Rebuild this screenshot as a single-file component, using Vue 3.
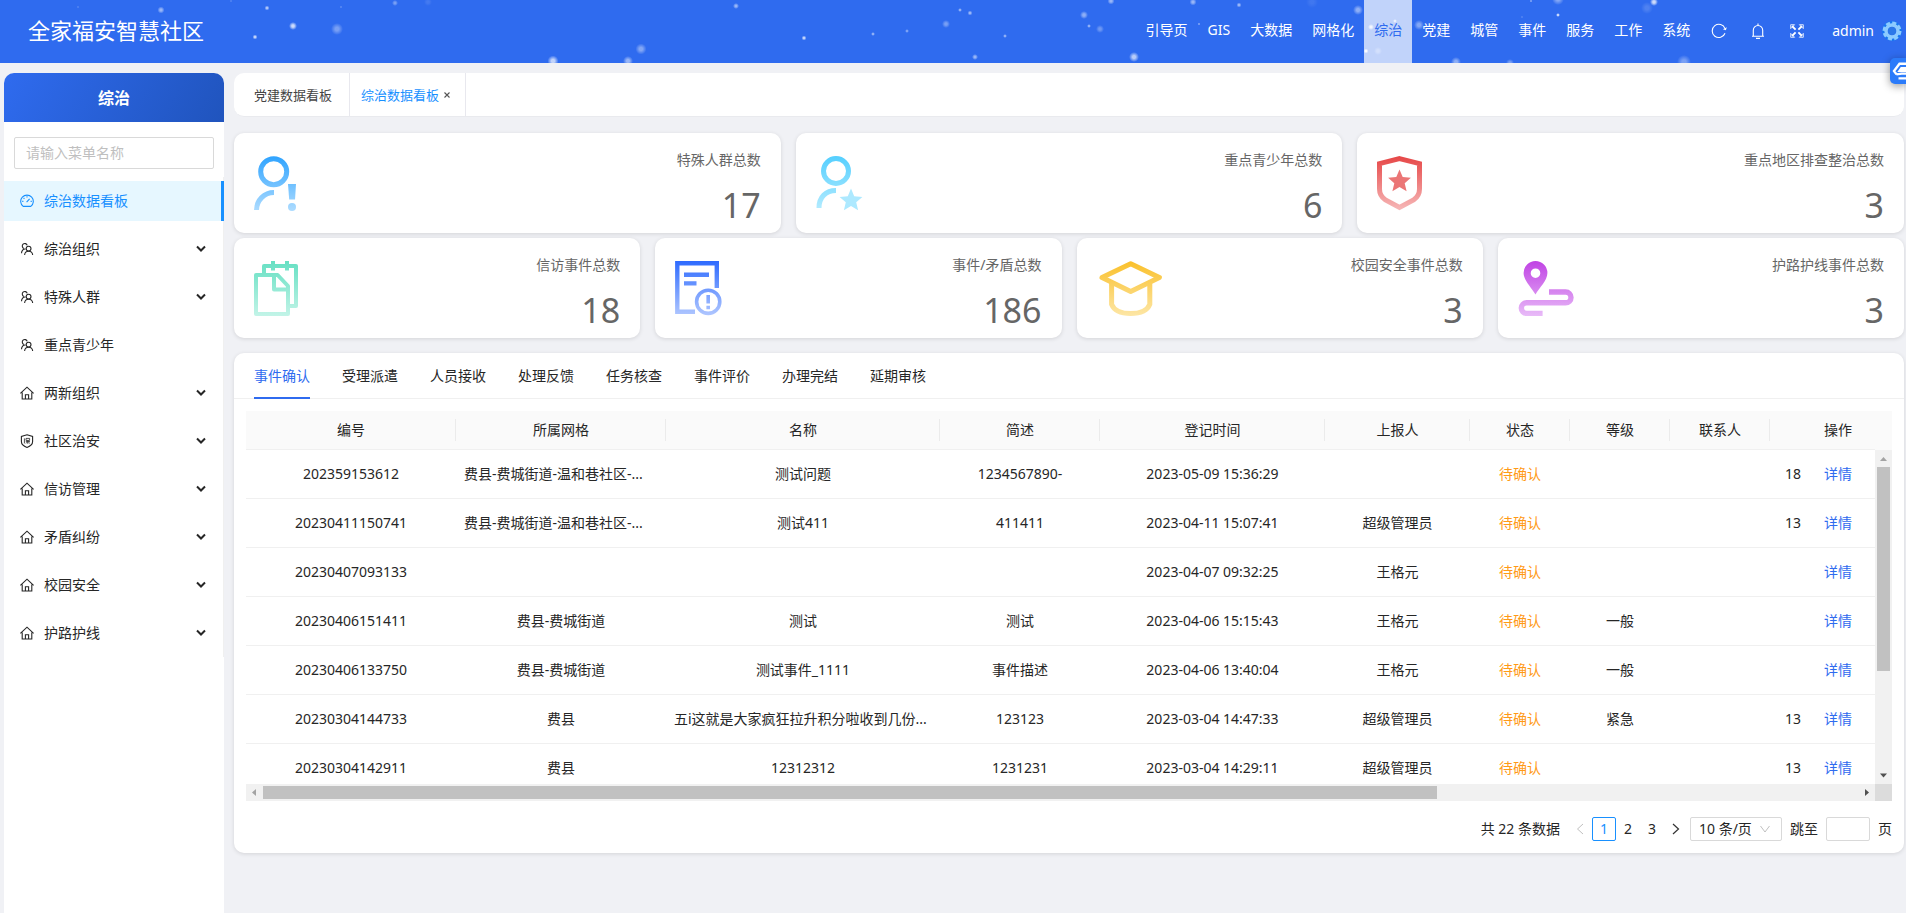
<script setup>
import { ref } from 'vue'

const navItems = ['引导页', 'GIS', '大数据', '网格化', '综治', '党建', '城管', '事件', '服务', '工作', '系统']
const activeNav = ref('综治')

const dots = [
  [78, 7, 1, 0.4], [161, 10, 3.5, 0.5], [231, 1, 1, 0.4], [267, 8, 2.5, 0.6], [293, 26, 4, 0.75],
  [255, 37, 2.5, 0.7], [337, 29, 6, 0.35], [341, 7, 1, 0.5], [395, 3, 3, 0.35], [428, 2, 4, 0.1],
  [553, 61, 5.5, 0.7], [628, 61, 5, 0.5], [641, 49, 5.5, 0.4], [736, 6, 3, 0.5], [804, 38, 2.5, 0.7],
  [873, 34, 2, 0.5], [907, 31, 2, 0.4], [946, 24, 4, 0.35], [960, 10, 2, 0.5], [970, 13, 2.5, 0.5],
  [975, 57, 3, 0.5], [1005, 36, 2, 0.5], [1084, 15, 4, 0.45], [1089, 26, 2, 0.5], [1100, 29, 4, 0.3],
  [1111, 1, 3.5, 0.5], [1134, 57, 5, 0.65], [1193, 2, 3.5, 0.5], [1199, 24, 1.5, 0.4], [1239, 5, 2.5, 0.5],
  [1312, 2, 6, 0.08], [1358, 10, 5, 0.45], [1371, 27, 3, 0.8], [1366, 51, 2.5, 0.9], [1395, 21, 2, 0.7],
  [1378, 51, 4, 0.3], [1419, 25, 5, 0.4], [1456, 62, 5, 0.45], [1510, 63, 4, 0.35], [1522, 17, 1, 0.4],
  [1531, 1, 1.5, 0.4], [1558, 15, 2, 0.8], [1558, -1, 6, 0.4], [1647, 8, 6, 0.15], [1654, 2, 4, 0.75],
  [1638, 26, 3, 0.3], [1684, 62, 7, 0.35],
]

const menu = [
  { text: '综治数据看板', icon: 'dashboard', sub: false },
  { text: '综治组织', icon: 'team', sub: true },
  { text: '特殊人群', icon: 'team', sub: true },
  { text: '重点青少年', icon: 'team', sub: false },
  { text: '两新组织', icon: 'home', sub: true },
  { text: '社区治安', icon: 'shield', sub: true },
  { text: '信访管理', icon: 'home', sub: true },
  { text: '矛盾纠纷', icon: 'home', sub: true },
  { text: '校园安全', icon: 'home', sub: true },
  { text: '护路护线', icon: 'home', sub: true },
]
const activeMenu = ref('综治数据看板')

const statsTop = [
  { label: '特殊人群总数', value: 17, icon: 'alert', from: '#2ea3ff', to: '#b0ddff' },
  { label: '重点青少年总数', value: 6, icon: 'youth', from: '#54cfff', to: '#b8edff' },
  { label: '重点地区排查整治总数', value: 3, icon: 'badge', from: '#e64646', to: '#f7bcbc' },
]
const statsBottom = [
  { label: '信访事件总数', value: 18, icon: 'files', from: '#66e0c3', to: '#c4f4e8' },
  { label: '事件/矛盾总数', value: 186, icon: 'report', from: '#2e6bff', to: '#b3c9ff' },
  { label: '校园安全事件总数', value: 3, icon: 'school', from: '#fac02a', to: '#fde7a8' },
  { label: '护路护线事件总数', value: 3, icon: 'route', from: '#c043e4', to: '#e9bdf8' },
]
const statRows = [statsTop, statsBottom]

const tabs = ['事件确认', '受理派遣', '人员接收', '处理反馈', '任务核查', '事件评价', '办理完结', '延期审核']
const activeTab = ref('事件确认')

const headers = ['编号', '所属网格', '名称', '简述', '登记时间', '上报人', '状态', '等级', '联系人']
const rows = [
  ['202359153612', '费县-费城街道-温和巷社区-...', '测试问题', '1234567890-', '2023-05-09 15:36:29', '', '待确认', '', '', '18'],
  ['20230411150741', '费县-费城街道-温和巷社区-...', '测试411', '411411', '2023-04-11 15:07:41', '超级管理员', '待确认', '', '', '13'],
  ['20230407093133', '', '', '', '2023-04-07 09:32:25', '王格元', '待确认', '', '', ''],
  ['20230406151411', '费县-费城街道', '测试', '测试', '2023-04-06 15:15:43', '王格元', '待确认', '一般', '', ''],
  ['20230406133750', '费县-费城街道', '测试事件_1111', '事件描述', '2023-04-06 13:40:04', '王格元', '待确认', '一般', '', ''],
  ['20230304144733', '费县', '五i这就是大家疯狂拉升积分啦收到几份...', '123123', '2023-03-04 14:47:33', '超级管理员', '待确认', '紧急', '', '13'],
  ['20230304142911', '费县', '12312312', '1231231', '2023-03-04 14:29:11', '超级管理员', '待确认', '', '', '13'],
]
const pages = [1, 2, 3]
const page = ref(1)
const star = '0,-12 3.2,-4.4 11.4,-3.7 5.2,1.7 7.1,9.7 0,5.5 -7.1,9.7 -5.2,1.7 -11.4,-3.7 -3.2,-4.4'
</script>

<template>
  <div class="app">
    <header class="topbar">
      <svg class="dots" aria-hidden="true">
        <defs>
          <radialGradient id="glow">
            <stop offset="0.3" stop-color="#fff" />
            <stop offset="1" stop-color="#fff" stop-opacity="0" />
          </radialGradient>
        </defs>
        <circle v-for="(d, i) in dots" :key="i" :cx="d[0]" :cy="d[1]" :r="d[2]" :opacity="d[3]" fill="url(#glow)" />
      </svg>
      <h1 class="brand">全家福安智慧社区</h1>
      <nav class="nav">
        <a v-for="n in navItems" :key="n" href="#" :class="{ active: n === activeNav }" @click.prevent="activeNav = n">{{ n }}</a>
      </nav>
      <div class="tools">
        <button type="button" aria-label="刷新">
          <svg width="16" height="16" viewBox="0 0 16 16" fill="none" stroke="#fff" stroke-width="1.1">
            <path d="M14 10.2A6.6 6.6 0 1 1 14 5.6" />
            <path d="M15.8 4.2 14.9 7.2 11.9 6.2Z" fill="#fff" stroke="none" />
          </svg>
        </button>
        <button type="button" aria-label="通知">
          <svg width="16" height="16" viewBox="0 0 16 16" fill="none" stroke="#fff" stroke-width="1.1">
            <path d="M2 13.2H14M3.3 13V7.2a4.7 4.7 0 0 1 9.4 0V13M8 2.4V.4M6 15.4H10" />
          </svg>
        </button>
        <button type="button" aria-label="全屏">
          <svg width="14" height="14" viewBox="0 0 14 14" fill="#fff" stroke="#fff">
            <path d="M.7.7H4.6L.7 4.6ZM13.3.7V4.6L9.4.7ZM.7 13.3V9.4L4.6 13.3ZM13.3 13.3H9.4L13.3 9.4Z" stroke-width=".8" />
            <path d="M2 2 5.6 5.6M12 2 8.4 5.6M2 12 5.6 8.4M12 12 8.4 8.4" stroke-width="1.8" />
          </svg>
        </button>
      </div>
      <a class="user" href="#">
        <span>admin</span>
        <svg width="20" height="20" viewBox="0 0 20 20" fill="none">
          <circle cx="10" cy="10" r="8.6" stroke="#1677f0" stroke-width="2.6" />
          <circle cx="10" cy="10" r="8" stroke="#8ccbff" stroke-width="3" stroke-dasharray="4 2.28" />
          <circle cx="10" cy="10" r="6" stroke="#8ccbff" stroke-width="3.4" />
          <circle cx="10" cy="10" r="4" fill="#2b78e8" />
        </svg>
      </a>
      <button class="float" type="button" aria-label="助手">
        <svg width="16" height="18" viewBox="0 0 16 18" fill="none" stroke="#fff" stroke-width="2.4">
          <path d="M17 1.8H7.5L2 9l2.5 3.4M17 11.6H9.6L4.4 12.4M17 6.2H9.4L7.6 8.8H17M6.5 16.4H17" />
        </svg>
      </button>
    </header>

    <div class="layout">
      <aside class="side">
        <h2 class="side-title">综治</h2>
        <div class="search">
          <input type="text" placeholder="请输入菜单名称" aria-label="请输入菜单名称" />
        </div>
        <ul class="menu">
          <li v-for="m in menu" :key="m.text">
            <a href="#" :class="{ active: m.text === activeMenu }" @click.prevent="activeMenu = m.text">
              <svg v-if="m.icon === 'dashboard'" class="mi" viewBox="0 0 14 14">
                <path d="M3.2 12.4A6.3 6.3 0 1 1 10.8 12.4Z M6.6 8.2 9.6 4.8M7 2.2V3.4M2.2 7.4H3.4M10.6 7.4H11.8M3.6 4 4.4 4.8" />
              </svg>
              <svg v-else-if="m.icon === 'team'" class="mi" viewBox="0 0 14 14">
                <circle cx="8.6" cy="6.6" r="2.4" />
                <path d="M4.6 13C4.8 10.4 6.4 9.2 8.6 9.2S12.4 10.4 12.7 13M7.2 3.4A2.5 2.5 0 1 0 4 6.4M5.6 7C3 6.8 1.6 8.6 1.5 11.2" />
              </svg>
              <svg v-else-if="m.icon === 'home'" class="mi" viewBox="0 0 14 14">
                <path d="M.4 7.4 7 1.2 13.6 7.4M2.2 6.4V13H11.8V6.4M5.4 13V8.8H8.6V13" />
              </svg>
              <svg v-else class="mi" viewBox="0 0 14 14">
                <path d="M7 .8 12.6 2.4V7.6C12.6 10.6 10 12.4 7 13.4 4 12.4 1.4 10.6 1.4 7.6V2.4Z" />
                <path class="thin" d="M4.4 4.4V9.4M6 4.4H9.6V6.4H6ZM5.8 7.6H10M7.8 6.4V9.8M6 9.4 7.4 8M9.8 9.4 8.4 8" />
              </svg>
              <span>{{ m.text }}</span>
              <svg v-if="m.sub" class="caret" viewBox="0 0 10 8"><path d="M1 1.5 5 5.5 9 1.5" /></svg>
            </a>
          </li>
        </ul>
      </aside>

      <main class="main">
        <nav class="pages">
          <a href="#">党建数据看板</a>
          <a href="#" class="active">综治数据看板
            <svg width="6" height="6" viewBox="0 0 6 6"><path d="M.5.5 5.5 5.5M5.5.5.5 5.5" stroke="#555" stroke-width="1.1" /></svg>
          </a>
        </nav>

        <section class="stats">
          <div v-for="(r, ri) in statRows" :key="ri" class="stat-row">
            <article v-for="s in r" :key="s.label" class="card">
              <svg class="card-icon" width="68" height="56" viewBox="0 0 68 56" fill="none" :stroke="`url(#g-${s.icon})`" stroke-width="5">
                <defs>
                  <linearGradient :id="`g-${s.icon}`" gradientUnits="userSpaceOnUse" x1="0" y1="0" x2="0" y2="56">
                    <stop offset="0" :stop-color="s.from" />
                    <stop offset="1" :stop-color="s.to" />
                  </linearGradient>
                </defs>
                <template v-if="s.icon === 'alert'">
                  <circle cx="19.7" cy="15.7" r="13" />
                  <path d="M2.5 54A17.5 17.5 0 0 1 20 36.5" />
                  <path d="M34 28H42L41 43.5H35.2Z" :fill="`url(#g-${s.icon})`" stroke="none" />
                  <circle cx="38" cy="51" r="4" :fill="`url(#g-${s.icon})`" stroke="none" />
                </template>
                <template v-else-if="s.icon === 'youth'">
                  <circle cx="20" cy="15" r="12.5" />
                  <path d="M3 52C3 41 10 34.5 20 34.5" />
                  <g transform="translate(35 44.6)"><polygon :points="star" fill="#ade9ff" stroke="none" /></g>
                </template>
                <template v-else-if="s.icon === 'badge'">
                  <path d="M22.5 2.6 42.5 7.6V33C42.5 38 40.5 41 37 43.6L22.5 51.4 8 43.6C4.5 41 2.5 38 2.5 33V7.6Z" />
                  <g transform="translate(22.5 25.5)"><polygon :points="star" fill="#eb7676" stroke="none" /></g>
                </template>
                <template v-else-if="s.icon === 'files'">
                  <path d="M2 14H23.6L34 25V53H2ZM20 14V28.5H34M10 14V5H42V45H34M19 0V9.5M33 0V9.5" stroke-width="4" stroke-linejoin="round" />
                </template>
                <template v-else-if="s.icon === 'report'">
                  <path d="M20 50.8H2.3V2.3H41.8V27M9 13.8H34M9 22.4H21.5" stroke-width="4.4" />
                  <circle cx="33.2" cy="40.8" r="11.6" stroke-width="3.6" />
                  <path d="M33.2 34V42.6M33.2 44.8V48.2" stroke-width="3.6" />
                </template>
                <template v-else-if="s.icon === 'school'">
                  <path d="M33.7 2.8 62.4 16.5 33.7 30.4 5 16.5ZM14.6 21V43.4C17 49.4 24 52.6 33.7 52.6S50.4 49.4 52.8 43.4V21" stroke-linejoin="round" />
                </template>
                <template v-else>
                  <path fill-rule="evenodd" d="M17.5 33.6C14 27 5.6 19.6 5.6 12A11.9 12 0 0 1 29.4 12C29.4 19.6 21 27 17.5 33.6ZM17.5 7.4A4.8 4.8 0 1 0 17.5 17 4.8 4.8 0 0 0 17.5 7.4Z" :fill="`url(#g-${s.icon})`" stroke="none" />
                  <path d="M31 31H47.6A5.4 5.4 0 0 1 47.6 41.8H8.6A5.3 5.3 0 0 0 8.6 52.4H24.6" stroke-width="5.4" />
                </template>
              </svg>
              <div class="card-text">
                <p class="card-label">{{ s.label }}</p>
                <p class="card-value">{{ s.value }}</p>
              </div>
            </article>
          </div>
        </section>

        <section class="panel">
          <div class="tabs" role="tablist">
            <button v-for="t in tabs" :key="t" type="button" role="tab" :aria-selected="t === activeTab" :class="{ active: t === activeTab }" @click="activeTab = t">{{ t }}</button>
          </div>

          <div class="grid">
            <div class="view">
              <table>
                <colgroup>
                  <col class="c-id" /><col class="c-id" /><col class="c-name" /><col class="c-desc" /><col class="c-time" /><col class="c-user" />
                  <col class="c-sm" /><col class="c-sm" /><col class="c-sm" /><col class="c-tel" /><col class="c-op" />
                </colgroup>
                <thead>
                  <tr>
                    <th v-for="h in headers" :key="h" scope="col">{{ h }}</th>
                    <td class="blank"></td>
                    <th class="last" scope="col">操作</th>
                  </tr>
                </thead>
                <tbody>
                  <tr v-for="r in rows" :key="r[0]">
                    <td v-for="(c, i) in r" :key="i" :class="{ status: i === 6, tel: i === 9, long: c.endsWith('...') }">{{ c }}</td>
                    <td><a href="#">详情</a></td>
                  </tr>
                </tbody>
              </table>
            </div>
            <div class="head-fill"></div>
            <div class="vbar">
              <svg width="17" height="17" viewBox="0 0 17 17"><path d="M5 11 8.5 7 12 11Z" fill="#a3a3a3" /></svg>
              <div class="vtrack"><div class="vthumb"></div></div>
              <svg width="17" height="17" viewBox="0 0 17 17"><path d="M5 6.5 8.5 10.5 12 6.5Z" fill="#505050" /></svg>
            </div>
            <div class="hbar">
              <svg width="17" height="17" viewBox="0 0 17 17"><path d="M10 5 6 8.5 10 12Z" fill="#a3a3a3" /></svg>
              <div class="htrack"><div class="hthumb"></div></div>
              <svg width="17" height="17" viewBox="0 0 17 17"><path d="M7 5 11 8.5 7 12Z" fill="#505050" /></svg>
            </div>
            <div class="corner"></div>
          </div>

          <div class="pager">
            <span class="total">共 22 条数据</span>
            <button type="button" aria-label="上一页" disabled>
              <svg width="8" height="12" viewBox="0 0 8 12"><path d="M7 1 1.5 6 7 11" stroke="#c0c0c0" /></svg>
            </button>
            <button v-for="p in pages" :key="p" type="button" :class="{ active: p === page }" @click="page = p">{{ p }}</button>
            <button type="button" aria-label="下一页">
              <svg width="8" height="12" viewBox="0 0 8 12"><path d="M1 1 6.5 6 1 11" stroke="#333" stroke-width="1.2" /></svg>
            </button>
            <span class="size">
              <select aria-label="每页条数"><option>10 条/页</option></select>
              <svg width="10" height="8" viewBox="0 0 10 8"><path d="M.5 1 5 7 9.5 1" stroke="#bfbfbf" /></svg>
            </span>
            <label class="jump">跳至<input type="text" />页</label>
          </div>
        </section>
      </main>
    </div>
  </div>
</template>

<style>
body {
  background: #f0f1f5;
}
</style>

<style scoped>
.app {
  display: flex;
  flex-direction: column;
  min-height: 100vh;
  overflow: hidden;
  font: 14px/22px "Noto Sans", "Noto Sans CJK SC", sans-serif;
  color: #262626;
  background: #f0f1f5;
}
* {
  box-sizing: border-box;
}
svg {
  flex: none;
  fill: none;
}
h1, h2, p, ul {
  margin: 0;
  padding: 0;
  font-weight: 400;
}
a {
  color: inherit;
  text-decoration: none;
}
button, input, select {
  font: inherit;
  color: inherit;
  margin: 0;
  padding: 0;
  border: 0;
  background: none;
}

.topbar {
  position: relative;
  display: flex;
  align-items: flex-start;
  height: 63px;
  padding: 0 4px 0 28px;
  background: #2f6bef;
  color: #fff;
  line-height: 60px;
}
.dots {
  position: absolute;
  inset: 0;
  width: 100%;
  height: 100%;
}
.brand {
  position: relative;
  margin-right: auto;
  font-size: 22px;
}
.nav {
  position: relative;
  display: flex;
}
.nav a {
  height: 63px;
  padding: 0 10px;
}
.nav a.active {
  background: rgba(255, 255, 255, 0.7);
  color: #2f6bef;
}
.tools {
  position: relative;
  display: flex;
  gap: 1px;
}
.tools button {
  display: flex;
  justify-content: center;
  align-items: center;
  width: 38px;
  height: 62px;
}
.user {
  position: relative;
  display: flex;
  align-items: center;
  gap: 8px;
  height: 62px;
  margin-left: 16px;
}
.float {
  position: absolute;
  z-index: 2;
  top: 58px;
  right: 0;
  display: flex;
  align-items: center;
  width: 16px;
  height: 26px;
  padding-left: 2px;
  overflow: hidden;
  border-radius: 5px 0 0 5px;
  background: #2b7bfa;
  box-shadow: 0 2px 8px rgba(0, 0, 0, 0.4);
}

.layout {
  flex: 1;
  display: flex;
  gap: 10px;
  padding: 10px 2px 0 4px;
}
.side {
  flex: none;
  width: 220px;
  background: #fff;
  border-radius: 10px 10px 0 0;
}
.side-title {
  height: 49px;
  border-radius: 10px 10px 0 0;
  background: linear-gradient(120deg, #2f6bef, #2054bd);
  color: #fff;
  font-size: 16px;
  font-weight: 700;
  line-height: 50px;
  text-align: center;
}
.search {
  padding: 15px 10px 8px;
}
.search input {
  display: block;
  width: 100%;
  height: 32px;
  padding: 0 11px 2px;
  border: 1px solid #d9d9d9;
  border-radius: 2px;
}
.search input::placeholder {
  color: #bfbfbf;
}
.menu {
  list-style: none;
  border-right: 1px solid #f0f0f0;
}
.menu li {
  padding: 4px 0;
}
.menu a {
  display: flex;
  align-items: center;
  height: 40px;
  margin-right: -1px;
  padding: 0 18px 0 16px;
}
.menu a.active {
  padding-right: 15px;
  border-right: 3px solid #1890ff;
  background: #e6f7ff;
  color: #1890ff;
}
.mi {
  width: 14px;
  height: 14px;
  margin-right: 10px;
  stroke: currentColor;
  stroke-width: 1.1;
}
.thin {
  stroke-width: 0.8;
}
.caret {
  width: 10px;
  height: 8px;
  margin-left: auto;
  stroke: #262626;
  stroke-width: 2;
}

.main {
  flex: 1;
  min-width: 0;
  display: flex;
  flex-direction: column;
}
.pages {
  display: flex;
  height: 44px;
  overflow: hidden;
  border-bottom: 1px solid #e9eaee;
  border-radius: 10px;
  background: #fff;
  font-size: 13px;
  line-height: 44px;
  color: #444;
}
.pages a {
  padding: 0 17px 0 20px;
  border-right: 1px solid #e8e8ee;
}
.pages .active {
  display: flex;
  align-items: center;
  gap: 5px;
  padding: 0 15px 0 11px;
  color: #1890ff;
}
.stats {
  display: grid;
  gap: 5px;
  margin: 16px 0 15px;
}
.stat-row {
  display: grid;
  grid-auto-flow: column;
  grid-auto-columns: 1fr;
  gap: 15px;
}
.card {
  display: flex;
  justify-content: space-between;
  height: 100px;
  padding: 16px 20px 13px;
  border-radius: 10px;
  background: #fff;
  box-shadow: 0 1px 4px rgba(0, 0, 0, 0.12);
  color: #666;
}
.card-icon {
  margin-top: 7px;
}
.card-text {
  display: flex;
  flex-direction: column;
  justify-content: space-between;
  text-align: right;
}
.card-value {
  font-size: 34px;
  line-height: 30px;
}

.panel {
  border-radius: 10px;
  background: #fff;
  box-shadow: 0 1px 4px rgba(0, 0, 0, 0.12);
}
.tabs {
  display: flex;
  gap: 32px;
  height: 46px;
  padding: 0 20px;
  border-bottom: 1px solid #f0f0f0;
}
.tabs button {
  height: 46px;
  padding-top: 2px;
  border-bottom: 2px solid transparent;
}
.tabs .active {
  border-color: #2f6bef;
  color: #2f6bef;
}
.grid {
  display: grid;
  grid-template-columns: minmax(0, 1fr) 17px;
  grid-template-rows: 39px 334px 17px;
  margin: 12px 12px 0;
}
.view {
  grid-row: 1 / 3;
  overflow: hidden;
}
table {
  width: 100%;
  table-layout: fixed;
  border-collapse: separate;
  border-spacing: 0;
  text-align: center;
  white-space: nowrap;
}
.c-id { width: 210px; }
.c-name { width: 274px; }
.c-desc { width: 160px; }
.c-time { width: 225px; }
.c-user { width: 145px; }
.c-sm { width: 100px; }
.c-tel { width: 31px; }
.c-op { width: 74px; }
th, td {
  height: 49px;
  padding: 0;
  border-bottom: 1px solid #f0f0f0;
  font-weight: 400;
}
th, .blank {
  height: 39px;
  background: linear-gradient(#ebebeb, #ebebeb) right center / 1px 22px no-repeat #fafafa;
}
.blank, .last {
  background: #fafafa;
}
.status {
  color: #ff9a16;
}
.tel {
  text-align: right;
}
.long {
  padding-left: 8px;
  text-align: left;
}
td a {
  color: #2f6bef;
}
.head-fill {
  background: #fafafa;
}
.vbar, .hbar {
  display: flex;
  background: #f1f1f1;
}
.vbar {
  flex-direction: column;
}
.vtrack, .htrack {
  flex: 1;
}
.vtrack {
  padding: 0 2px;
}
.htrack {
  padding: 2px 0;
}
.vthumb {
  height: 68%;
  background: #c1c1c1;
}
.hthumb {
  width: 73.6%;
  height: 100%;
  background: #c1c1c1;
}
.corner {
  background: #dcdcdc;
}
.pager {
  display: flex;
  align-items: center;
  justify-content: flex-end;
  padding: 16px 12px 12px;
}
.total {
  margin-right: 8px;
}
.pager button {
  display: flex;
  align-items: center;
  justify-content: center;
  width: 24px;
  height: 24px;
}
.pager button.active {
  border: 1px solid #1890ff;
  border-radius: 2px;
  color: #1890ff;
}
.size {
  display: flex;
  align-items: center;
  width: 92px;
  height: 24px;
  margin: 0 8px 0 2px;
  padding-right: 11px;
  border: 1px solid #d9d9d9;
  border-radius: 2px;
}
.size select {
  flex: 1;
  min-width: 0;
  height: 22px;
  padding-left: 8px;
  appearance: none;
}
.jump {
  display: flex;
  align-items: center;
  gap: 8px;
}
.jump input {
  width: 44px;
  height: 24px;
  border: 1px solid #d9d9d9;
  border-radius: 2px;
}
</style>
